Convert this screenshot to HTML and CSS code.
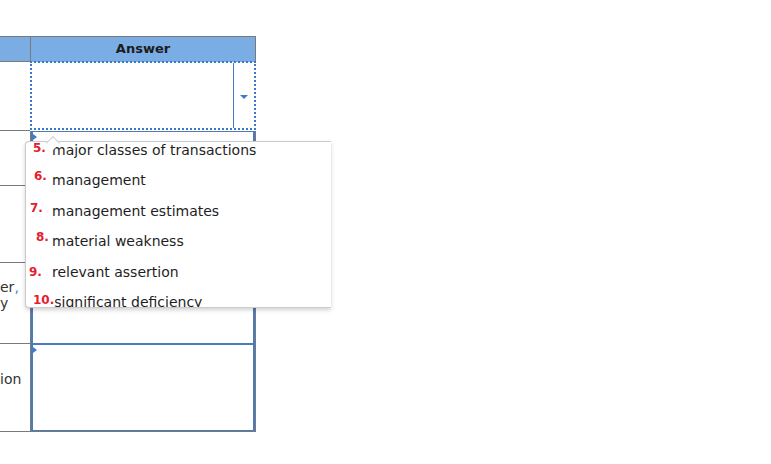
FILE: index.html
```html
<!DOCTYPE html>
<html>
<head>
<meta charset="utf-8">
<link rel="stylesheet" href="styles.css">
</head>
<body>
<div class="sheet">
  <div class="row head">
    <div class="lc"></div>
    <div class="ac">Answer</div>
  </div>
  <div class="row r1">
    <div class="lc"></div>
    <div class="ac focus">
      <div class="sel">
        <div class="sel-main"></div>
        <div class="sel-btn"><span class="arrow"></span></div>
      </div>
    </div>
  </div>
  <div class="row r2">
    <div class="lc"></div>
    <div class="ac"><div class="box"><span class="tri"></span></div></div>
  </div>
  <div class="row r3">
    <div class="lc"></div>
    <div class="ac"><div class="box"></div></div>
  </div>
  <div class="row r4">
    <div class="lc"><div class="ltxt t4">er<span class="blue">,</span><br>y</div></div>
    <div class="ac"><div class="box"></div></div>
  </div>
  <div class="row r5">
    <div class="lc"><div class="ltxt t5">ion</div></div>
    <div class="ac"><div class="box"><span class="tri"></span></div></div>
  </div>

  <div class="dd-wrap">
    <div class="notch"></div>
    <div class="dd">
      <div class="item"><span class="num n5">5.</span><span class="txt">major classes of transactions</span></div>
      <div class="item"><span class="num n6">6.</span><span class="txt">management</span></div>
      <div class="item"><span class="num n7">7.</span><span class="txt">management estimates</span></div>
      <div class="item"><span class="num n8">8.</span><span class="txt">material weakness</span></div>
      <div class="item"><span class="num n9">9.</span><span class="txt">relevant assertion</span></div>
      <div class="item"><span class="num n10">10.</span><span class="txt">significant deficiency</span></div>
    </div>
  </div>
</div>
</body>
</html>
```

FILE: styles.css
```css
* { box-sizing: border-box; }
html, body { margin: 0; padding: 0; background: #ffffff; }
body {
  font-family: "DejaVu Sans", Verdana, sans-serif;
  color: #222;
}
.sheet {
  position: relative;
  margin-top: 36px;
  width: 256px;
  border-top: 1px solid #7a7a7a;
}
.row { display: flex; }
.lc {
  width: 31px;
  flex: 0 0 31px;
  border-right: 1px solid #7a7a7a;
  border-bottom: 1px solid #7a7a7a;
  overflow: hidden;
}
.ac {
  width: 225px;
  flex: 0 0 225px;
  border-right: 1px solid #7a7a7a;
  display: flex;
}
.head { height: 25px; }
.head .lc { background: #79ade4; }
.head .ac {
  background: #79ade4;
  justify-content: center;
  align-items: center;
  font-weight: bold;
  font-size: 13px;
  color: #1c1c1c;
  padding-bottom: 3px;
}
.r1 { height: 69px; }
.r1 .lc { border-right: none; width: 30px; flex-basis: 30px; }
.ac.focus {
  width: 226px;
  flex-basis: 226px;
  border: 2px dotted #3b78c6;
  margin-top: -1px;
  height: 69px;
  padding: 0 1px 0 0;
}
.sel { display: flex; flex: 1; }
.sel-main { flex: 1; }
.sel-btn {
  width: 20px;
  border-left: 1px solid #4a7bbd;
  display: flex;
  align-items: center;
  justify-content: center;
  padding-top: 2px;
}
.arrow {
  width: 0; height: 0;
  border-left: 4px solid transparent;
  border-right: 4px solid transparent;
  border-top: 4px solid #3d7cc9;
}
.r2 { height: 55px; }
.r3 { height: 77px; }
.r4 { height: 81px; }
.r5 { height: 88px; }
.r5 .ac { border-bottom: 1px solid #7a7a7a; }
.box {
  flex: 1;
  border-left: 2px solid #4a7bbd;
  border-right: 2px solid #4a7bbd;
  border-top: 1px solid #4a7bbd;
  border-bottom: 1px solid #4a7bbd;
  padding: 2px 0 0 0;
}
.tri {
  display: block;
  width: 0; height: 0;
  border-left: 4px solid #3d7cc9;
  border-top: 3px solid transparent;
  border-bottom: 3px solid transparent;
}
.ltxt {
  font-size: 14px;
  line-height: 16px;
  color: #333;
  white-space: nowrap;
}
.t4 { padding-top: 16px; }
.t5 { padding-top: 27px; }
.blue { color: #3b86dc; }

.dd-wrap {
  position: absolute;
  left: 25px;
  top: 104px;
}
.notch {
  position: absolute;
  left: 23px;
  top: -3px;
  width: 10px;
  height: 10px;
  background: #fff;
  border-left: 1px solid #cfcfcf;
  border-top: 1px solid #cfcfcf;
  transform: rotate(45deg);
  z-index: 2;
}
.dd {
  position: relative;
  width: 306px;
  height: 167px;
  background: #fff;
  border: 1px solid #cbcbcb;
  border-right: none;
  border-radius: 4px 0 0 4px;
  box-shadow: 0 2px 4px rgba(0,0,0,0.18);
  overflow: hidden;
  padding-top: 0;
  z-index: 1;
}
.item {
  display: flex;
  align-items: flex-start;
  height: 30.4px;
}
.num {
  flex: 0 0 26px;
  font-size: 12px;
  font-weight: bold;
  line-height: 17px;
  color: #e4202f;
  white-space: nowrap;
}
.txt {
  font-size: 14px;
  line-height: 17px;
  color: #1e1e1e;
  white-space: nowrap;
}
.n5 { padding-left: 7px; margin-top: -2px; }
.n6 { padding-left: 8px; margin-top: -4px; }
.n7 { padding-left: 4px; margin-top: -3px; }
.n8 { padding-left: 10px; margin-top: -4px; }
.n9 { padding-left: 3px; margin-top: 0; }
.n10 { padding-left: 7px; margin-top: -2px; }
```
